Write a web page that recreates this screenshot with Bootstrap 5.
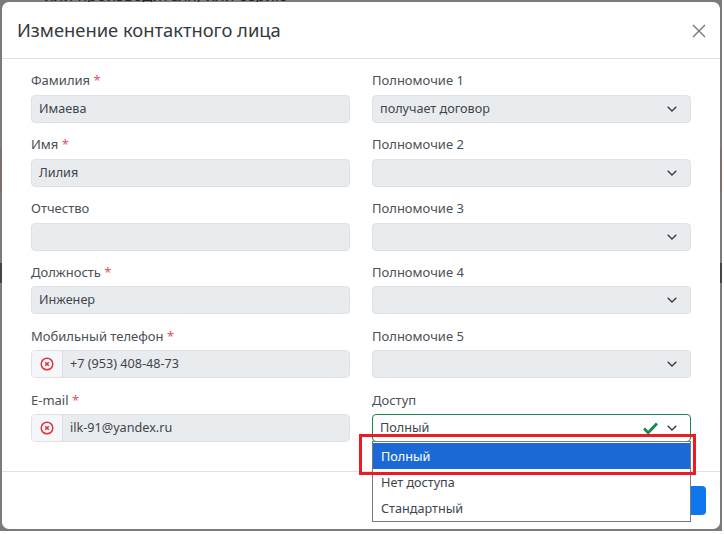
<!DOCTYPE html>
<html lang="ru"><head><meta charset="utf-8">
<link href="https://cdn.jsdelivr.net/npm/bootstrap@5.3.0/dist/css/bootstrap.min.css" rel="stylesheet">
<style>
html,body{height:534px;overflow:hidden;background:#fff}
body{font-family:"Noto Sans","Open Sans",sans-serif;font-size:13px;color:#343a40}
.shot{position:relative;width:722px;height:531px;overflow:hidden;background:#7b7b7b linear-gradient(#7b7b7b 149px,#80706a 149px,#80706a 193px,#7b7b7b 193px,#7b7b7b 263px,#3f454b 263px,#3f454b 283px,#7b7b7b 283px)}
.page-behind{position:absolute;left:44px;top:-15px;font-size:16px;line-height:20px;color:#222;white-space:nowrap}
.dlg{position:absolute;left:2px;top:2px;width:718px;height:527px;background:#fff;border-radius:7px}
.dlg-head{height:57px;padding:0 15px;border-bottom:1px solid #dee2e6}
.dlg-title{font-size:18.35px;font-weight:400;color:#343a40;margin:0}
.dlg-x{width:14px;height:14px;margin-right:-1px;margin-top:1px}
.dlg-body{padding:12.4px 29px 0;height:413px;border-bottom:1px solid #dee2e6;column-gap:22px;display:grid;grid-template-columns:319px 319px;grid-auto-rows:63.9px}
.fld-label{display:block;height:21px;line-height:18px;margin:0 0 2.35px 0;font-size:13px;color:#495057}
.req{color:#e4505f}
.fld{height:28px;background:#e9ecef;border:1px solid #dee2e6;border-radius:4px;padding:0 7px;line-height:24px;font-size:12.65px;color:#3f454b;position:relative}
.chev{position:absolute;right:13px;top:10px;width:10px;height:6px}
.grp{display:flex;height:28px;border:1px solid #dee2e6;border-radius:4px;overflow:hidden;font-size:12.65px;color:#3f454b}
.grp-ic{width:31px;background:#f6f7f8;border-right:1px solid #dee2e6;display:flex;align-items:center;justify-content:center}
.grp-in{flex:1;background:#e9ecef;padding:0 7px;line-height:25px}
.fld-ok{background:#fff;border-color:#198754}
.tick{position:absolute;right:32px;top:7px;width:15px;height:13px}
.dlist{position:absolute;left:372px;top:441px;width:319px;height:81px;border:1px solid #7a7a7a;background:#fff;font-size:12.65px;color:#3f454b;z-index:3}
.dopt{height:26px;line-height:26px;padding:0 8px}
.dopt-on{background:#1b69d6;color:#fff;margin-top:1px}
.mark-box{position:absolute;left:359px;top:434px;width:337px;height:41px;border:3px solid #ed1c24;z-index:4;pointer-events:none}
.save{position:absolute;left:660px;top:486px;width:46px;height:29px;background:#0d78ee;border-radius:4px}
</style></head><body>
<div class="shot">
<div class="page-behind">или производителя, или серию</div>
<div class="dlg d-flex flex-column">
 <div class="dlg-head d-flex align-items-center justify-content-between">
  <h5 class="dlg-title">Изменение контактного лица</h5>
  <svg class="dlg-x" viewBox="0 0 14 14"><path d="M1 1l12 12M13 1L1 13" stroke="#6c757d" stroke-width="1.3" fill="none"/></svg>
 </div>
 <div class="dlg-body">
  <div><label class="fld-label">Фамилия <span class="req">*</span></label><div class="fld">Имаева</div></div>
  <div><label class="fld-label">Полномочие 1</label><div class="fld">получает договор<svg class="chev" viewBox="0 0 10 6"><path d="M.7.7L5 5 9.300.7" stroke="#343a40" stroke-width="1.3" fill="none"/></svg></div></div>
  <div><label class="fld-label">Имя <span class="req">*</span></label><div class="fld">Лилия</div></div>
  <div><label class="fld-label">Полномочие 2</label><div class="fld"><svg class="chev" viewBox="0 0 10 6"><path d="M.7.7L5 5 9.300.7" stroke="#343a40" stroke-width="1.3" fill="none"/></svg></div></div>
  <div><label class="fld-label">Отчество</label><div class="fld"></div></div>
  <div><label class="fld-label">Полномочие 3</label><div class="fld"><svg class="chev" viewBox="0 0 10 6"><path d="M.7.7L5 5 9.300.7" stroke="#343a40" stroke-width="1.3" fill="none"/></svg></div></div>
  <div><label class="fld-label">Должность <span class="req">*</span></label><div class="fld">Инженер</div></div>
  <div><label class="fld-label">Полномочие 4</label><div class="fld"><svg class="chev" viewBox="0 0 10 6"><path d="M.7.7L5 5 9.300.7" stroke="#343a40" stroke-width="1.3" fill="none"/></svg></div></div>
  <div><label class="fld-label">Мобильный телефон <span class="req">*</span></label><div class="grp"><span class="grp-ic"><svg width="14" height="14" viewBox="0 0 14 14"><circle cx="7" cy="7" r="5.8" stroke="#dc3545" stroke-width="1.5" fill="none"/><path d="M5.200 5.200l3.600 3.600M8.800 5.200l-3.600 3.600" stroke="#dc3545" stroke-width="1.6"/></svg></span><span class="grp-in">+7 (953) 408-48-73</span></div></div>
  <div><label class="fld-label">Полномочие 5</label><div class="fld"><svg class="chev" viewBox="0 0 10 6"><path d="M.7.7L5 5 9.300.7" stroke="#343a40" stroke-width="1.3" fill="none"/></svg></div></div>
  <div><label class="fld-label">E-mail <span class="req">*</span></label><div class="grp"><span class="grp-ic"><svg width="14" height="14" viewBox="0 0 14 14"><circle cx="7" cy="7" r="5.8" stroke="#dc3545" stroke-width="1.5" fill="none"/><path d="M5.200 5.200l3.600 3.600M8.800 5.200l-3.600 3.600" stroke="#dc3545" stroke-width="1.6"/></svg></span><span class="grp-in">ilk-91@yandex.ru</span></div></div>
  <div><label class="fld-label">Доступ</label><div class="fld fld-ok">Полный<svg class="tick" viewBox="0 0 15 13"><path d="M1 6.500l4.200 4.200L14 1.500" stroke="#198754" stroke-width="3" fill="none"/></svg><svg class="chev" viewBox="0 0 10 6"><path d="M.7.7L5 5 9.300.7" stroke="#343a40" stroke-width="1.3" fill="none"/></svg></div></div>
 </div>
</div>
<div class="save"></div>
<div class="dlist"><div class="dopt dopt-on">Полный</div><div class="dopt">Нет доступа</div><div class="dopt">Стандартный</div></div>
<div class="mark-box"></div>
</div>
</body></html>
